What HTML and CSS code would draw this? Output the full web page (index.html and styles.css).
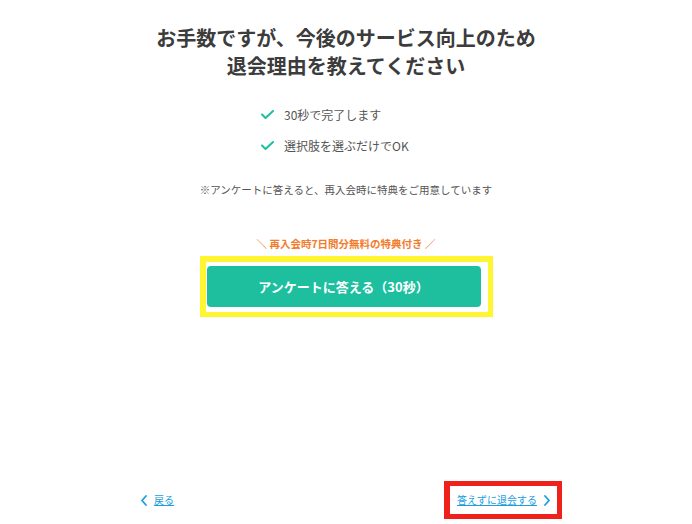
FILE: index.html
```html
<!DOCTYPE html>
<html lang="ja">
<head>
    <meta charset="UTF-8">
    <meta name="viewport" content="width=device-width, initial-scale=1.0">
    <title>退会アンケート</title>
    <link rel="stylesheet" href="styles.css">
</head>
<body>
    <div class="page">
        <main class="survey">
            <h1 class="survey-title">お手数ですが、今後のサービス向上のため<br>退会理由を教えてください</h1>

            <ul class="points">
                <li>
                    <svg class="check" width="13" height="9" viewBox="0 0 13 9"><polyline points="1,4.5 4.5,8 12,1" /></svg>
                    30秒で完了します
                </li>
                <li>
                    <svg class="check" width="13" height="9" viewBox="0 0 13 9"><polyline points="1,4.5 4.5,8 12,1" /></svg>
                    選択肢を選ぶだけでOK
                </li>
            </ul>

            <p class="note">※アンケートに答えると、再入会時に特典をご用意しています</p>

            <p class="bonus">＼ 再入会時7日間分無料の特典付き ／</p>
            <div class="highlight-yellow">
                <button type="button" class="answer-button">アンケートに答える（30秒）</button>
            </div>
        </main>

        <nav class="footer-nav">
            <a href="#" class="nav-link">
                <svg class="chevron" width="6" height="11" viewBox="0 0 6 11"><polyline points="5,1 1,5.5 5,10" /></svg>
                <span>戻る</span>
            </a>
            <div class="highlight-red">
                <a href="#" class="nav-link">
                    <span>答えずに退会する</span>
                    <svg class="chevron" width="6" height="11" viewBox="0 0 6 11"><polyline points="1,1 5,5.5 1,10" /></svg>
                </a>
            </div>
        </nav>
    </div>
</body>
</html>
```

FILE: styles.css
```css
body {
    margin: 0;
    font-family: "Noto Sans CJK JP", "Noto Sans", sans-serif;
    background-color: #ffffff;
    color: #555555;
}
.page {
    width: 692px;
    height: 524px;
    display: flex;
    flex-direction: column;
}
.survey {
    display: flex;
    flex-direction: column;
    align-items: center;
}
.survey-title {
    margin: 24px 0 0;
    font-size: 20px;
    line-height: 28px;
    font-weight: bold;
    color: #3c3c3c;
    text-align: center;
}
.points {
    list-style: none;
    margin: 24px 0 0;
    padding: 0;
    width: 170px;
}
.points li {
    display: flex;
    align-items: center;
    gap: 10px;
    height: 20px;
    font-size: 12px;
    color: #555555;
}
.points li + li {
    margin-top: 11px;
}
.check {
    fill: none;
    stroke: #1dbf9d;
    stroke-width: 2;
    stroke-linecap: round;
    stroke-linejoin: round;
}
.note {
    margin: 27px 0 0;
    font-size: 10.5px;
    line-height: 16px;
    color: #555555;
}
.bonus {
    margin: 38px 0 0;
    font-size: 10.5px;
    line-height: 16px;
    font-weight: bold;
    color: #f27c2c;
}
.highlight-yellow {
    margin-top: 4px;
    border-style: solid;
    border-color: #fff531;
    border-width: 6px 5px 5px 6px;
    padding: 4px 7px 5px 1px;
}
.answer-button {
    display: block;
    width: 274px;
    height: 41px;
    padding: 0;
    background-color: #1dbf9f;
    color: #ffffff;
    border: none;
    border-radius: 4px;
    font-family: inherit;
    font-size: 13px;
    font-weight: bold;
    cursor: pointer;
}
.footer-nav {
    margin-top: auto;
    margin-bottom: 5px;
    padding: 0 130px 0 141px;
    display: flex;
    justify-content: space-between;
    align-items: center;
}
.nav-link {
    display: flex;
    align-items: center;
    gap: 7px;
    font-size: 10px;
    line-height: 16px;
    color: #1a9ee0;
}
.nav-link span {
    text-decoration: underline;
}
.chevron {
    fill: none;
    stroke: #1a9ee0;
    stroke-width: 1.8;
    stroke-linecap: round;
    stroke-linejoin: round;
}
.highlight-red {
    border-style: solid;
    border-color: #f0201a;
    border-width: 5px 5px 5px 6px;
    padding: 6px 7px 6px 7px;
}
```
